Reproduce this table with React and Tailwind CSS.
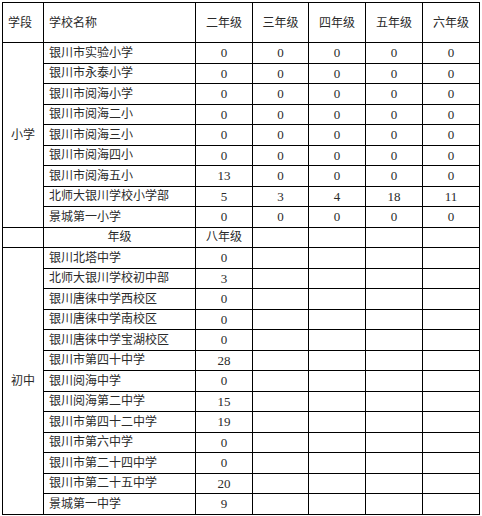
import React from "react";

const primary = [
  ["银川市实验小学", 0, 0, 0, 0, 0],
  ["银川市永泰小学", 0, 0, 0, 0, 0],
  ["银川市阅海小学", 0, 0, 0, 0, 0],
  ["银川市阅海二小", 0, 0, 0, 0, 0],
  ["银川市阅海三小", 0, 0, 0, 0, 0],
  ["银川市阅海四小", 0, 0, 0, 0, 0],
  ["银川市阅海五小", 13, 0, 0, 0, 0],
  ["北师大银川学校小学部", 5, 3, 4, 18, 11],
  ["景城第一小学", 0, 0, 0, 0, 0],
];

const middle = [
  ["银川北塔中学", 0],
  ["北师大银川学校初中部", 3],
  ["银川唐徕中学西校区", 0],
  ["银川唐徕中学南校区", 0],
  ["银川唐徕中学宝湖校区", 0],
  ["银川市第四十中学", 28],
  ["银川阅海中学", 0],
  ["银川阅海第二中学", 15],
  ["银川市第四十二中学", 19],
  ["银川市第六中学", 0],
  ["银川市第二十四中学", 0],
  ["银川市第二十五中学", 20],
  ["景城第一中学", 9],
];

const grades = ["二年级", "三年级", "四年级", "五年级", "六年级"];

const cell = "border border-black p-0 align-middle";
const mid = `${cell} text-center`;
const num = `${cell} text-center text-[13px]`;
const name = `${cell} pl-[5px] text-left`;

export default function App() {
  return (
    <div
      className="w-[482px] h-[516px] bg-white pt-[2px] pl-[2px] text-[12px] leading-none text-[#2a2a2a]"
      style={{ fontFamily: '"Liberation Serif", "Noto Sans CJK SC", serif' }}
    >
      <table className="border-collapse table-fixed w-[477px]">
        <colgroup>
          <col className="w-[41px]" />
          <col className="w-[152px]" />
          <col className="w-[57px]" />
          <col className="w-[56px]" />
          <col className="w-[57px]" />
          <col className="w-[57px]" />
          <col className="w-[57px]" />
        </colgroup>
        <tbody>
          <tr className="h-[40px]">
            <td className={name}>学段</td>
            <td className={name}>学校名称</td>
            {grades.map((g) => (
              <td key={g} className={mid}>
                {g}
              </td>
            ))}
          </tr>
          {primary.map((row, i) => (
            <tr key={row[0]} className="h-[20.5px]">
              {i === 0 && (
                <td rowSpan={primary.length} className={mid}>
                  小学
                </td>
              )}
              <td className={name}>{row[0]}</td>
              {row.slice(1).map((v, j) => (
                <td key={j} className={num}>
                  {v}
                </td>
              ))}
            </tr>
          ))}
          <tr className="h-[20.5px]">
            <td className={cell}></td>
            <td className={mid}>年级</td>
            <td className={mid}>八年级</td>
            <td className={cell}></td>
            <td className={cell}></td>
            <td className={cell}></td>
            <td className={cell}></td>
          </tr>
          {middle.map((row, i) => (
            <tr key={row[0]} className="h-[20.5px]">
              {i === 0 && (
                <td rowSpan={middle.length} className={mid}>
                  初中
                </td>
              )}
              <td className={name}>{row[0]}</td>
              <td className={num}>{row[1]}</td>
              <td className={cell}></td>
              <td className={cell}></td>
              <td className={cell}></td>
              <td className={cell}></td>
            </tr>
          ))}
        </tbody>
      </table>
    </div>
  );
}
